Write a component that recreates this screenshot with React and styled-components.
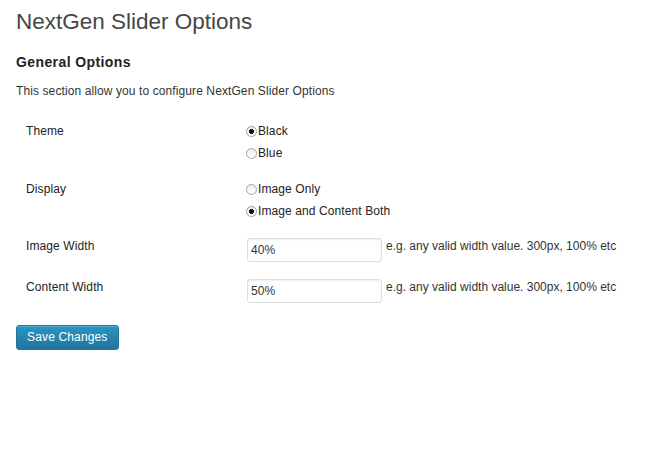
import React from "react";
import styled, { createGlobalStyle } from "styled-components";

const GlobalStyle = createGlobalStyle`
  html, body {
    margin: 0;
    padding: 0;
    background: #fff;
  }
  body {
    font-family: Arial, "Liberation Sans", sans-serif;
    font-size: 12px;
    letter-spacing: 0.1px;
    color: #333;
  }
`;

const Wrap = styled.div`
  padding: 7px 16px 40px 16px;
`;

const Title = styled.h2`
  margin: 0;
  font-size: 22.5px;
  font-weight: 400;
  letter-spacing: 0;
  line-height: 29px;
  color: #464646;
`;

const SectionTitle = styled.h3`
  margin: 16px 0 0;
  font-size: 14px;
  font-weight: 700;
  letter-spacing: 0.4px;
  line-height: 20px;
  color: #222;
`;

const Description = styled.p`
  margin: 10px 0 0;
  line-height: 18px;
`;

const FormTable = styled.div`
  margin-top: 13px;
`;

const Row = styled.div`
  display: grid;
  grid-template-columns: 230px 1fr;
  padding: ${(p) => (p.$field ? "9px 0 8px" : "7px 0")};
`;

const Label = styled.div`
  padding-left: 10px;
  line-height: ${(p) => (p.$field ? "16px" : "22px")};
  color: #222;
`;

const Choices = styled.div`
  display: flex;
  flex-direction: column;
`;

const Choice = styled.label`
  display: flex;
  align-items: center;
  height: 22px;
  color: #222;
`;

const Radio = styled.input.attrs({ type: "radio" })`
  appearance: none;
  -webkit-appearance: none;
  width: 11px;
  height: 11px;
  margin: 0 1px 0 0;
  border: 1px solid #a4a4a4;
  border-radius: 50%;
  background: linear-gradient(#ececec, #fff);
  box-sizing: border-box;

  &:checked {
    background: radial-gradient(circle, #111 0 2.2px, transparent 2.7px),
      linear-gradient(#ececec, #fff);
  }
`;

const FieldLine = styled.div`
  display: flex;
  align-items: flex-start;
`;

const TextInput = styled.input`
  box-sizing: border-box;
  width: 135px;
  height: 24px;
  margin: 0 4px 0 1px;
  padding: 2px 3px;
  border: 1px solid #ddd;
  border-radius: 3px;
  box-shadow: inset 0 1px 2px rgba(0, 0, 0, 0.07);
  font-family: Arial, "Liberation Sans", sans-serif;
  font-size: 12px;
  letter-spacing: 0.1px;
  color: #333;
  outline: none;
`;

const Hint = styled.span`
  color: #333;
  letter-spacing: 0;
  line-height: 16px;
`;

const SaveButton = styled.button`
  margin-top: 14px;
  height: 25px;
  padding: 0 10px;
  border: 1px solid #21759b;
  border-radius: 3px;
  background: linear-gradient(#2a95c5, #21759b);
  box-shadow: inset 0 1px 0 rgba(120, 200, 230, 0.5);
  color: #fff;
  font-family: Arial, "Liberation Sans", sans-serif;
  font-size: 12px;
  letter-spacing: 0.15px;
  line-height: 23px;
  cursor: pointer;
`;

const App = () => {
  return (
    <Wrap>
      <GlobalStyle />
      <Title>NextGen Slider Options</Title>
      <SectionTitle>General Options</SectionTitle>
      <Description>This section allow you to configure NextGen Slider Options</Description>
      <FormTable>
        <Row>
          <Label>Theme</Label>
          <Choices>
            <Choice>
              <Radio name="theme" defaultChecked />
              Black
            </Choice>
            <Choice>
              <Radio name="theme" />
              Blue
            </Choice>
          </Choices>
        </Row>
        <Row>
          <Label>Display</Label>
          <Choices>
            <Choice>
              <Radio name="display" />
              Image Only
            </Choice>
            <Choice>
              <Radio name="display" defaultChecked />
              Image and Content Both
            </Choice>
          </Choices>
        </Row>
        <Row $field>
          <Label $field>Image Width</Label>
          <FieldLine>
            <TextInput defaultValue="40%" />
            <Hint>e.g. any valid width value. 300px, 100% etc</Hint>
          </FieldLine>
        </Row>
        <Row $field>
          <Label $field>Content Width</Label>
          <FieldLine>
            <TextInput defaultValue="50%" />
            <Hint>e.g. any valid width value. 300px, 100% etc</Hint>
          </FieldLine>
        </Row>
      </FormTable>
      <SaveButton type="button">Save Changes</SaveButton>
    </Wrap>
  );
};

export default App;
